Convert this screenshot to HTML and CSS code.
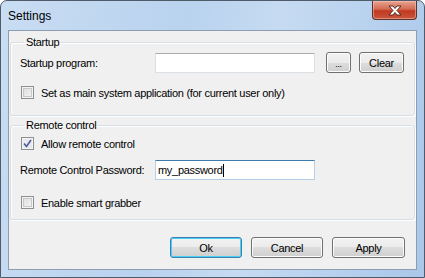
FILE: index.html
```html
<!DOCTYPE html>
<html>
  <head>
    <title>Settings</title>
    <link rel="stylesheet" href="styles.css">
  </head>
  <body>
    <div class="window">
      <div class="titlebar">
        <span class="title">Settings</span>
        <div class="close-btn">
          <svg width="16" height="11" viewBox="0 0 16 11">
            <path d="M2 1 H6 L8 3.5 L10 1 H14 L10 5.5 L14 10 H10 L8 7.5 L6 10 H2 L6 5.5 Z" fill="#fff" stroke="#5a2a22" stroke-width="1" stroke-linejoin="round"/>
          </svg>
        </div>
      </div>
      <div class="client">
        <fieldset class="group group-startup">
          <legend>Startup</legend>
          <div class="row row-program">
            <label class="field-label">Startup program:</label>
            <div class="textbox"></div>
            <button class="btn btn-browse">...</button>
            <button class="btn btn-clear">Clear</button>
          </div>
          <div class="row check-row check-main">
            <span class="checkbox"></span>
            <span>Set as main system application (for current user only)</span>
          </div>
        </fieldset>
        <fieldset class="group group-remote">
          <legend>Remote control</legend>
          <div class="row check-row check-allow">
            <span class="checkbox checked">
              <svg width="9" height="9" viewBox="0 0 9 9"><path d="M1 4.5 L3.5 7.5 L8 1" fill="none" stroke="#4a5f97" stroke-width="1.6"/></svg>
            </span>
            <span>Allow remote control</span>
          </div>
          <div class="row row-password">
            <label class="field-label">Remote Control Password:</label>
            <div class="textbox focused">my_password<span class="caret"></span></div>
          </div>
          <div class="row check-row check-grabber">
            <span class="checkbox"></span>
            <span>Enable smart grabber</span>
          </div>
        </fieldset>
        <div class="dialog-buttons">
          <button class="btn btn-dialog btn-default">Ok</button>
          <button class="btn btn-dialog">Cancel</button>
          <button class="btn btn-dialog btn-apply">Apply</button>
        </div>
      </div>
    </div>
  </body>
</html>
```

FILE: styles.css
```css
body {
    margin: 0px;
    font-family: "Liberation Sans", Arial, sans-serif;
    font-size: 11px;
    letter-spacing: -0.3px;
    color: #000000;
}
.window {
    width: 425px;
    height: 278px;
    box-sizing: border-box;
    border: 1px solid #4f5b69;
    border-radius: 7px 7px 0 0;
    background: linear-gradient(100deg, #c9ddf3 0%, #b9d2ee 40%, #c6dbf2 60%, #a9c7ea 100%);
    overflow: hidden;
}
.titlebar {
    height: 29px;
    display: flex;
    justify-content: space-between;
    align-items: flex-start;
}
.title {
    font-size: 12px;
    letter-spacing: 0;
    margin: 8px 0 0 7px;
}
.close-btn {
    width: 43px;
    height: 18px;
    margin-right: 7px;
    border: 1px solid #5b3228;
    border-top: none;
    border-radius: 0 0 4px 4px;
    background: linear-gradient(#e7a593 0%, #d36a51 45%, #bf3a1f 55%, #c9563c 100%);
    box-shadow: inset 0 0 0 1px rgba(255, 200, 190, 0.5);
    display: flex;
    align-items: center;
    justify-content: center;
}
.client {
    margin: 0 7px;
    height: 240px;
    box-sizing: border-box;
    border: 1px solid #8d9db2;
    background: #f0f0f0;
    padding: 5px 0 0 1px;
}
.group {
    margin: 0;
    width: 405px;
    box-sizing: border-box;
    border: 1px solid #d5dfe5;
    border-radius: 3px;
    padding: 0 10px 0 9px;
    box-shadow: inset 1px 1px 0 #ffffff, 1px 1px 0 #ffffff;
}
.group legend {
    padding: 0 2px;
    margin-left: 4px;
    line-height: 13px;
}
.group-startup {
    height: 80px;
}
.group-remote {
    margin-top: 3px;
    height: 101px;
}
.row {
    display: flex;
    align-items: center;
}
.row-program {
    margin-top: 3px;
    height: 21px;
}
.field-label {
    width: 135px;
}
.textbox {
    width: 160px;
    height: 20px;
    box-sizing: border-box;
    border: 1px solid #dbdfe6;
    border-top-color: #abadb3;
    background: #ffffff;
    padding: 0 2px;
    line-height: 18px;
    display: flex;
    align-items: center;
}
.textbox.focused {
    border-color: #b5cfe7;
    border-top-color: #3d7bad;
}
.caret {
    width: 1px;
    height: 13px;
    background: #000000;
}
.btn {
    font-family: "Liberation Sans", Arial, sans-serif;
    font-size: 11px;
    letter-spacing: -0.3px;
    height: 21px;
    box-sizing: border-box;
    border: 1px solid #707070;
    border-radius: 3px;
    background: linear-gradient(#f2f2f2 0%, #ebebeb 50%, #dddddd 50%, #cfcfcf 100%);
    box-shadow: inset 0 0 0 1px #fcfcfc;
    padding: 0;
    color: #000000;
}
.btn-browse {
    width: 25px;
    margin-left: 11px;
    font-size: 9px;
    padding-top: 3px;
}
.btn-clear {
    width: 45px;
    margin-left: 8px;
}
.check-row {
    height: 13px;
    gap: 7px;
    padding-left: 1px;
}
.check-main {
    margin-top: 13px;
}
.check-allow {
    margin-top: 5px;
}
.row-password {
    margin-top: 10px;
    height: 20px;
}
.check-grabber {
    margin-top: 16px;
}
.checkbox {
    width: 13px;
    height: 13px;
    box-sizing: border-box;
    border: 1px solid #8e8f8f;
    background: linear-gradient(135deg, #dcdcdc, #f6f6f6);
    box-shadow: inset 0 0 0 1px #f4f4f4, inset 0 0 0 2px #c8c8c8;
    display: flex;
    align-items: center;
    justify-content: center;
}
.checkbox.checked {
    background: #e9e9ef;
    box-shadow: inset 0 0 0 1px #f4f4f4;
}
.dialog-buttons {
    display: flex;
    justify-content: flex-end;
    gap: 9px;
    margin-top: 17px;
    padding-right: 11px;
}
.btn-dialog {
    width: 72px;
}
.btn-apply {
    width: 73px;
}
.btn-default {
    border-color: #3c7fb1;
    box-shadow: inset 0 0 0 1px #48d0f5;
}
```
